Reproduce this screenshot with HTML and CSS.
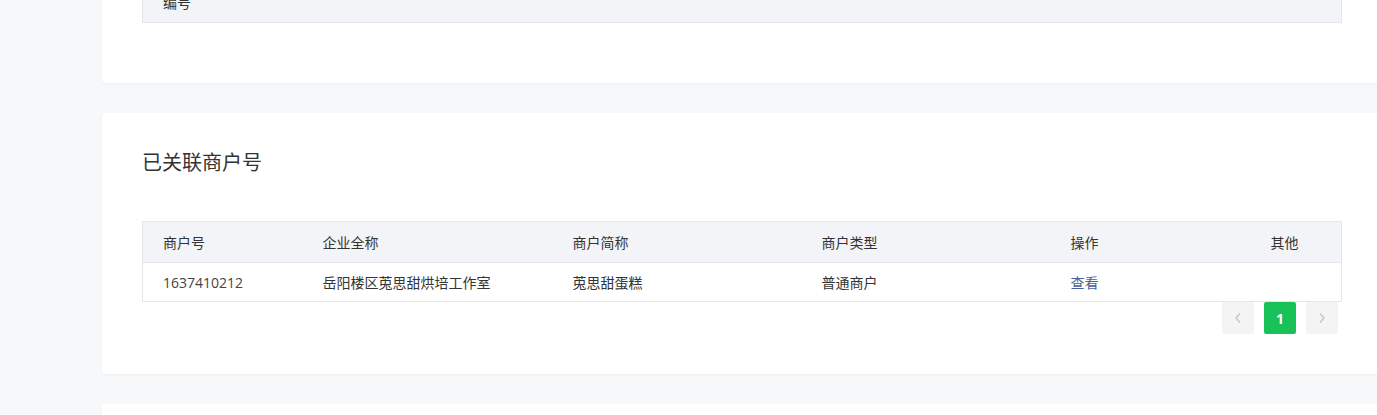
FILE: index.html
```html
<!DOCTYPE html>
<html lang="zh">
<head>
<meta charset="utf-8">
<link rel="stylesheet" href="styles.css">
</head>
<body>
<div class="layout">
  <aside class="sidebar"></aside>
  <main class="main">
    <section class="card card-top">
      <table class="grid">
        <colgroup><col style="width:160px"><col></colgroup>
        <thead><tr><th>编号</th><th></th></tr></thead>
      </table>
    </section>
    <section class="card card-merchant">
      <h2 class="card-title">已关联商户号</h2>
      <table class="grid">
        <colgroup>
          <col style="width:160px"><col style="width:250px"><col style="width:249px"><col style="width:249px"><col style="width:200px"><col>
        </colgroup>
        <thead>
          <tr><th>商户号</th><th>企业全称</th><th>商户简称</th><th>商户类型</th><th>操作</th><th>其他</th></tr>
        </thead>
        <tbody>
          <tr><td class="num">1637410212</td><td>岳阳楼区莵思甜烘培工作室</td><td>莵思甜蛋糕</td><td>普通商户</td><td><a class="link" href="#">查看</a></td><td></td></tr>
        </tbody>
      </table>
      <div class="pager">
        <button class="pg pg-arrow" type="button"><svg width="8" height="12" viewBox="0 0 8 12"><path d="M6 1.5 2 6l4 4.5" fill="none" stroke="#c0c4cc" stroke-width="1.4"/></svg></button>
        <button class="pg pg-active" type="button">1</button>
        <button class="pg pg-arrow" type="button"><svg width="8" height="12" viewBox="0 0 8 12"><path d="M2 1.5 6 6l-4 4.5" fill="none" stroke="#c0c4cc" stroke-width="1.4"/></svg></button>
      </div>
    </section>
    <section class="card card-bottom"></section>
  </main>
</div>
</body>
</html>
```
FILE: styles.css
```css
html, body {
  margin: 0;
  padding: 0;
  overflow: hidden;
  background: #f7f8fa;
  font-family: "Noto Sans CJK SC", "Noto Sans", sans-serif;
  color: #333;
  height: 415px;
}
.layout {
  display: flex;
  align-items: flex-start;
}
.sidebar {
  width: 102px;
  flex: none;
}
.main {
  width: 1280px;
  flex: none;
  display: flex;
  flex-direction: column;
  gap: 30px;
  margin-top: -19px;
}
.card {
  background: #fff;
  border-radius: 4px;
  box-shadow: 0 1px 3px rgba(0, 0, 0, 0.04);
  padding: 0 40px;
}
.card-top {
  padding-top: 0;
  padding-bottom: 60px;
}
.card-top .grid {
  border-top: 0;
}
.card-top .grid th {
  height: 41px;
}
.card-merchant {
  padding-top: 34px;
  padding-bottom: 40px;
}
.card-bottom {
  height: 200px;
}
.card-title {
  margin: 0 0 44px 0;
  font-size: 20px;
  font-weight: normal;
  line-height: 30px;
  color: #333;
}
.grid {
  width: 1200px;
  border-collapse: collapse;
  table-layout: fixed;
  border: 1px solid #e5e6eb;
  font-size: 14px;
}
.grid th {
  background: #f3f4f8;
  font-weight: normal;
  text-align: left;
  height: 40px;
  padding: 0 0 0 20px;
  color: #333;
  border-bottom: 1px solid #e5e6eb;
}
.grid td {
  height: 38px;
  padding: 0 0 0 20px;
  color: #333;
}
.grid td.num {
  font-family: "Open Sans", "Noto Sans", sans-serif;
  font-size: 14px;
  color: #444;
}
.link {
  color: #46609e;
  text-decoration: none;
}
.pager {
  display: flex;
  justify-content: flex-end;
  gap: 10px;
  padding-right: 4px;
}
.pg {
  width: 32px;
  height: 32px;
  border: 0;
  border-radius: 2px;
  padding: 0;
  display: flex;
  align-items: center;
  justify-content: center;
  font-family: "Noto Sans", sans-serif;
  font-size: 14px;
  font-weight: bold;
}
.pg-arrow {
  background: #f4f4f5;
}
.pg-active {
  background: #19c259;
  color: #fff;
}
```
